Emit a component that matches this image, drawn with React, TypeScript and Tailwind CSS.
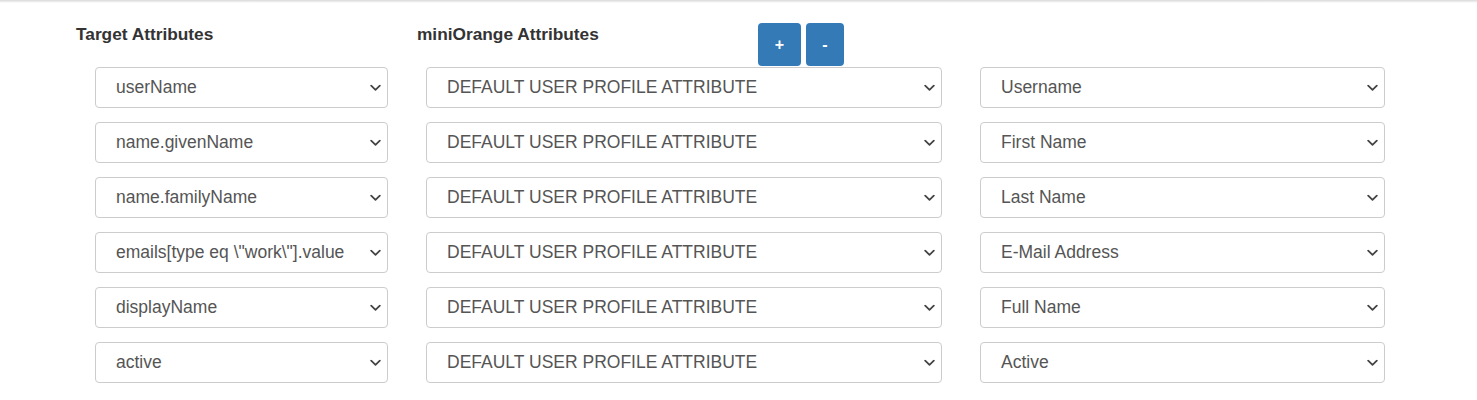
import React from 'react'

const rows = [
  { target: 'userName', label: 'Username' },
  { target: 'name.givenName', label: 'First Name' },
  { target: 'name.familyName', label: 'Last Name' },
  { target: 'emails[type eq \\"work\\"].value', label: 'E-Mail Address' },
  { target: 'displayName', label: 'Full Name' },
  { target: 'active', label: 'Active' },
]

const Chevron = () => (
  <svg
    className="pointer-events-none absolute right-[7px] top-1/2 -translate-y-1/2"
    width="11"
    height="7"
    viewBox="0 0 11 7"
    fill="none"
  >
    <path d="M1.2 1.2 5.5 5.3 9.8 1.2" stroke="#444" strokeWidth="1.8" strokeLinecap="round" strokeLinejoin="round" />
  </svg>
)

const Select = ({ value, width }: { value: string; width: string }) => (
  <div className={`relative ${width}`}>
    <select
      defaultValue={value}
      className="h-[41px] w-full appearance-none rounded-[4px] border border-[#cccccc] bg-white pl-[20px] pr-[26px] text-[17.5px] text-[#555555] outline-none"
    >
      <option value={value}>{value}</option>
    </select>
    <Chevron />
  </div>
)

export default function App() {
  return (
    <div className="min-h-[400px] bg-white font-['Liberation_Sans',Arial,sans-serif]">
      {/* top shadow line */}
      <div className="h-[3px] bg-gradient-to-b from-[#d9d9d9] to-white" />

      {/* Header */}
      <div className="flex items-start pl-[76px] pt-[20px]">
        <div className="mt-[1px] w-[341px] text-[17.3px] font-bold leading-[20px] text-[#333333]">
          Target Attributes
        </div>
        <div className="mt-[1px] w-[341px] text-[17.3px] font-bold leading-[20px] text-[#333333]">
          miniOrange Attributes
        </div>
        <div className="flex gap-[5px]">
          <button className="flex h-[43px] w-[43px] items-center justify-center rounded-[4px] bg-[#337ab7] text-[16px] font-bold text-white">
            +
          </button>
          <button className="flex h-[43px] w-[38px] items-center justify-center rounded-[4px] bg-[#337ab7] text-[16px] font-bold text-white">
            -
          </button>
        </div>
      </div>

      {/* Rows */}
      <div className="mt-[1px] flex flex-col gap-[14px] pl-[95px]">
        {rows.map((r) => (
          <div key={r.label} className="flex gap-[38px]">
            <Select value={r.target} width="w-[293px]" />
            <Select value="DEFAULT USER PROFILE ATTRIBUTE" width="w-[516px]" />
            <Select value={r.label} width="w-[405px]" />
          </div>
        ))}
      </div>
    </div>
  )
}
